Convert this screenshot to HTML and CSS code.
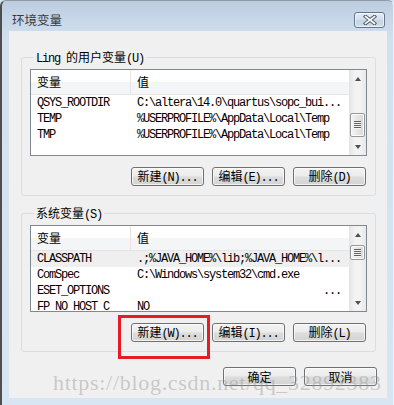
FILE: index.html
```html
<!DOCTYPE html>
<html lang="zh-CN">
<head>
<meta charset="UTF-8">
<meta name="viewport" content="width=device-width, initial-scale=1.0">
<title>环境变量</title>
<link rel="stylesheet" href="styles.css">
</head>
<body>

<div class="window">
  <div class="titlebar">
    <span class="title">环境变量</span>
    <span class="close">
      <svg width="14" height="10" viewBox="0 0 14 10">
        <path d="M2.5 1.5 L11.5 8.5 M11.5 1.5 L2.5 8.5" stroke="#4f5b6b" stroke-width="3.6" stroke-linecap="square" fill="none"/>
        <path d="M2.5 1.5 L11.5 8.5 M11.5 1.5 L2.5 8.5" stroke="#fff" stroke-width="1.6" stroke-linecap="square" fill="none"/>
      </svg>
    </span>
  </div>

  <div class="client">
    <!-- user variables -->
    <fieldset class="group">
      <legend><span class="en">Ling </span>的用户变量<span class="en">(U)</span></legend>
      <div class="list">
        <div class="list-body">
          <div class="row head"><span class="name">变量</span><span class="value">值</span></div>
          <div class="row item"><span class="name">QSYS_ROOTDIR</span><span class="value">C:\altera\14.0\quartus\sopc_bui...</span></div>
          <div class="row item"><span class="name">TEMP</span><span class="value">%USERPROFILE%\AppData\Local\Temp</span></div>
          <div class="row item"><span class="name">TMP</span><span class="value">%USERPROFILE%\AppData\Local\Temp</span></div>
        </div>
        <div class="scrollbar">
          <span class="arrow up"></span>
          <span class="track"><span class="thumb" style="margin-top: 26px; height: 24px;"><span class="grip"></span></span></span>
          <span class="arrow down"></span>
        </div>
      </div>
      <div class="buttons">
        <button class="btn">新建<span class="en">(N)...</span></button>
        <button class="btn">编辑<span class="en">(E)...</span></button>
        <button class="btn">删除<span class="en">(D)</span></button>
      </div>
    </fieldset>

    <!-- system variables -->
    <fieldset class="group">
      <legend>系统变量<span class="en">(S)</span></legend>
      <div class="list">
        <div class="list-body">
          <div class="row head"><span class="name">变量</span><span class="value">值</span></div>
          <div class="row item selected"><span class="name">CLASSPATH</span><span class="value">.;%JAVA_HOME%\lib;%JAVA_HOME%\l...</span></div>
          <div class="row item"><span class="name">ComSpec</span><span class="value">C:\Windows\system32\cmd.exe</span></div>
          <div class="row item"><span class="name">ESET_OPTIONS</span><span class="value right">...</span></div>
          <div class="row item"><span class="name">FP_NO_HOST_C</span><span class="value">NO</span></div>
        </div>
        <div class="scrollbar">
          <span class="arrow up"></span>
          <span class="track"><span class="thumb" style="margin-top: 2px; height: 15px;"><span class="grip"></span></span></span>
          <span class="arrow down"></span>
        </div>
      </div>
      <div class="buttons">
        <span class="mark-wrap">
          <button class="btn">新建<span class="en">(W)...</span></button>
          <span class="mark"></span>
        </span>
        <button class="btn">编辑<span class="en">(I)...</span></button>
        <button class="btn">删除<span class="en">(L)</span></button>
      </div>
    </fieldset>

    <div class="footer">
      <button class="btn">确定</button>
      <button class="btn">取消</button>
    </div>
  </div>

  <div class="watermark">https://blog.csdn.net/qq_32892383</div>
</div>

</body>
</html>
```

FILE: styles.css
```css
* {
  box-sizing: border-box;
}

body {
  margin: 0;
  width: 394px;
  height: 405px;
  overflow: hidden;
  background: #d6e3f0;
  font-family: "Noto Sans CJK SC", sans-serif;
  font-size: 12px;
  color: #000;
}

/* Window frame */
.window {
  position: relative;
  height: 405px;
  border-left: 2px solid #4e4e4e;
  border-top: 1px solid #8f9aa6;
  border-right: 1px solid #eef3f8;
  border-radius: 6px 6px 0 0;
  padding: 0 6px 7px 7px;
  background: linear-gradient(#bccde0 0, #c9d8e9 20px, #d3e0ee 40px, #d8e5f2 100%);
}

.titlebar {
  height: 30px;
  display: flex;
  align-items: flex-start;
  justify-content: space-between;
  padding: 0 2px 0 3px;
}

.title {
  margin-top: 11px;
  line-height: 16px;
  font-size: 12.5px;
  color: #3a3a3a;
}

.close {
  margin-top: 11px;
  width: 31px;
  height: 16px;
  display: flex;
  align-items: center;
  justify-content: center;
  border: 1px solid #66768a;
  border-radius: 3px;
  background: linear-gradient(#e4ecf5, #d2deeb 50%, #c6d4e4 51%, #d0dcea);
  box-shadow: inset 0 0 0 1px rgba(255, 255, 255, 0.6);
}

.client {
  height: 367px;
  background: #f0f0f0;
  padding: 19px 11px 0 12px;
}

/* Group boxes */
.group {
  margin: 0;
  min-width: 0;
  padding: 5px 8px 9px;
  border: 1px solid #d5dfe5;
  border-radius: 3px;
}

.group + .group {
  margin-top: 10px;
}

.group legend {
  margin-left: 4px;
  padding: 0 2px;
  height: 14px;
  line-height: 14px;
}

.en {
  font-family: "Liberation Mono", monospace;
  font-size: 12px;
  letter-spacing: -1.2px;
}

/* List view */
.list {
  display: flex;
  height: 87px;
  border: 1px solid #828790;
  background: #fff;
}

.list-body {
  flex: 1;
  overflow: hidden;
}

.row {
  display: flex;
  height: 16px;
  line-height: 16px;
  white-space: nowrap;
}

.row.head {
  height: 25px;
  line-height: 24px;
  background: linear-gradient(#ffffff 50%, #f4f5f7 50%);
  border-bottom: 1px solid #e5e5e5;
}

.row.item {
  font-family: "Liberation Mono", monospace;
  font-size: 12px;
  letter-spacing: -1.2px;
}

.row.selected {
  background: #efefef;
}

.name {
  width: 100px;
  padding-left: 6px;
  flex-shrink: 0;
}

.head .name {
  border-right: 1px solid #e5e5e5;
}

.value {
  padding-left: 6px;
}

.value.right {
  flex: 1;
  text-align: right;
  padding-right: 8px;
}

/* Scroll bar */
.scrollbar {
  width: 17px;
  display: flex;
  flex-direction: column;
  background: linear-gradient(to right, #e4e4e4, #f3f3f3 35%, #f3f3f3 65%, #e8e8e8);
}

.arrow {
  height: 17px;
  display: flex;
  align-items: center;
  justify-content: center;
}

.arrow::before {
  content: "";
  border-left: 3.5px solid transparent;
  border-right: 3.5px solid transparent;
}

.up::before {
  border-bottom: 4px solid #505050;
}

.down::before {
  border-top: 4px solid #505050;
}

.track {
  flex: 1;
  display: flex;
  flex-direction: column;
}

.thumb {
  display: flex;
  align-items: center;
  justify-content: center;
  margin-left: 1px;
  margin-right: 1px;
  border: 1px solid #979797;
  border-radius: 2px;
  background: linear-gradient(to right, #f5f5f5, #e6e6e6 50%, #d9d9d9);
  box-shadow: inset 0 0 0 1px #fbfbfb;
}

.grip {
  width: 7px;
  height: 8px;
  background: repeating-linear-gradient(#606060 0 1px, #f6f6f6 1px 2px);
}

/* Buttons */
.buttons {
  display: flex;
  justify-content: flex-end;
  gap: 8px;
  margin-top: 11px;
  padding-right: 1px;
}

.btn {
  width: 73px;
  height: 19px;
  padding: 0;
  border: 1px solid #707070;
  border-radius: 3px;
  background: linear-gradient(#f3f3f3, #ebebeb 48%, #dddddd 52%, #d3d3d3);
  box-shadow: inset 0 0 0 1px rgba(255, 255, 255, 0.7);
  font-family: "Noto Sans CJK SC", sans-serif;
  font-size: 12px;
  line-height: 16px;
  color: #000;
}

.mark-wrap {
  position: relative;
  display: flex;
}

.mark {
  position: absolute;
  left: -13px;
  top: -8px;
  width: 92px;
  height: 44px;
  border: 3px solid #e51c24;
}

.footer {
  display: flex;
  justify-content: flex-end;
  gap: 8px;
  margin-top: 15px;
  margin-right: -1px;
}

/* CSDN watermark over the dialog */
.watermark {
  position: absolute;
  left: 51px;
  top: 371px;
  font-family: "Liberation Serif", serif;
  font-size: 22px;
  line-height: 22px;
  letter-spacing: 0.7px;
  color: rgba(150, 150, 150, 0.45);
  white-space: nowrap;
}
```
